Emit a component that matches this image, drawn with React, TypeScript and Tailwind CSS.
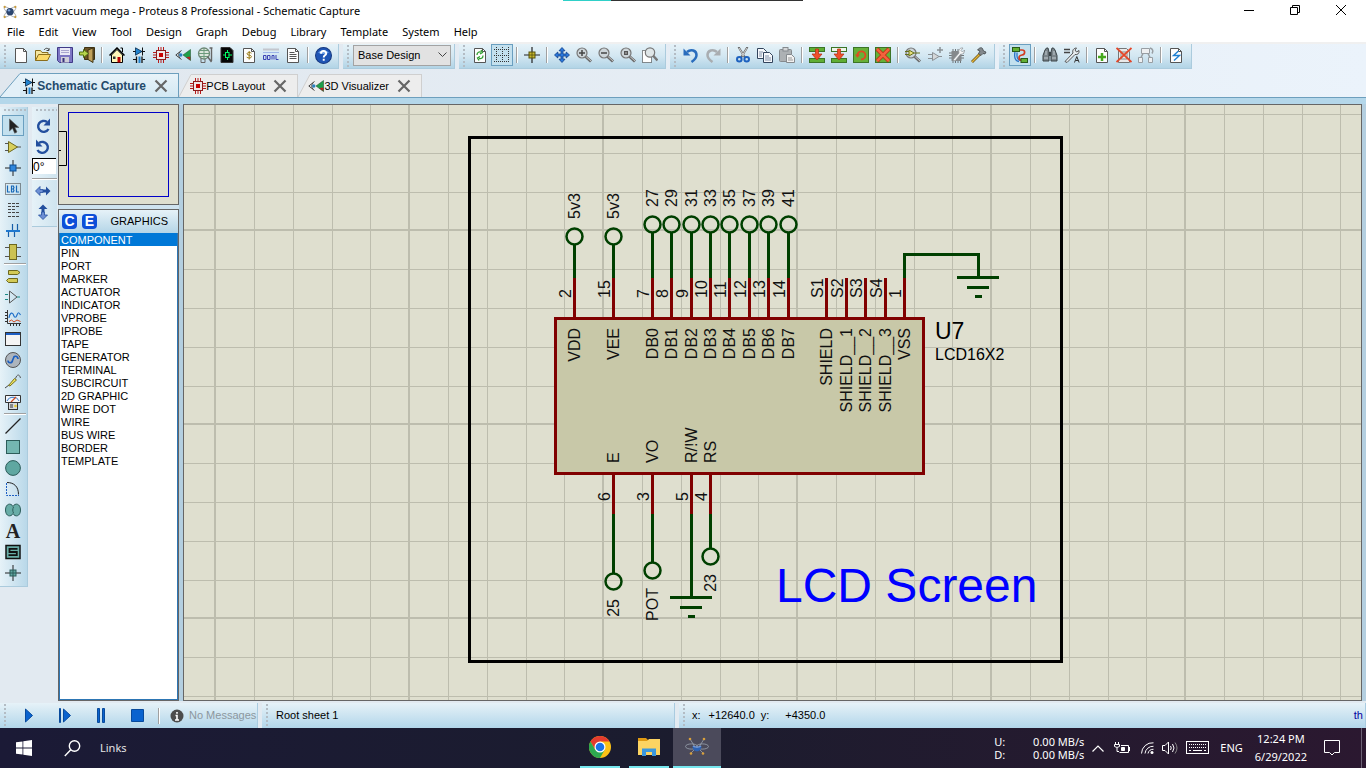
import React from "react";
import type { ReactNode } from "react";

const PAPER = "#fdfdfd";

function Pic({ s = 16, v = 16, children }: { s?: number; v?: number; children: ReactNode }) {
  return (
    <svg width={s} height={s} viewBox={`0 0 ${v} ${v}`} fill="none" aria-hidden="true" className="shrink-0">
      {children}
    </svg>
  );
}

function Page({ children }: { children?: ReactNode }) {
  return (
    <Pic>
      <path d="M2.500 1.500h8l3 3v11h-11z" fill={PAPER} stroke="#555" />
      <path d="M10.500 1.500v3h3" stroke="#555" />
      {children}
    </Pic>
  );
}

const NewFile = () => <Page />;

const OpenFolder = () => (
  <Pic>
    <path d="M.5 13.500v-10h5l1.500 2h6v3" fill="#f4e6a0" stroke="#8a6d1c" />
    <path d="M.5 13.500l3-6h12l-3 6z" fill="#fbd968" stroke="#8a6d1c" />
    <path d="M9 3c2-2.500 4-2 5 0m0-2v2.500h-2.500" stroke="#444" />
  </Pic>
);

const Disk = () => (
  <Pic>
    <path d="M.5.5h15v15h-13l-2-2z" fill="#7d76c4" stroke="#403a88" />
    <rect x="3" y="1" width="10" height="7" fill="#e9e9f6" />
    <path d="M4 3.500h8M4 5.500h8" stroke="#a9a6cf" />
    <rect x="4" y="10" width="8" height="5.500" fill="#cfcfd8" />
    <rect x="5.500" y="11" width="2" height="4" fill="#37327c" />
  </Pic>
);

const ExitDoor = () => (
  <Pic>
    <path d="M5.500.5h10v12h-10z" fill="#6d5426" stroke="#3e3212" />
    <path d="M9 3l5-2v14.500l-5-3z" fill="#c0a15a" stroke="#3e3212" />
    <path d="M.5 5h4V2.500l5 4-5 4V8h-4z" fill="#b7d64c" stroke="#4f6d12" />
  </Pic>
);

const House = () => (
  <Pic>
    <path d="M2.500 8v7.500h11V8L8 2.500z" fill="#fff6b8" stroke="#000" />
    <path d="M.5 8.500L8 1l7.500 7.500" stroke="#000" strokeWidth="1.500" />
    <path d="M11.500 1h2v4" stroke="#000" />
    <rect x="8.500" y="10" width="3" height="5.500" fill="#b00" />
    <rect x="4" y="9.500" width="2.500" height="2.500" fill="#333" />
  </Pic>
);

const Parts = () => (
  <Pic>
    <path d="M2 4.500h12M11.500.5v8M2 12.500h3M11.500 12.500H14" stroke="#111" />
    <path d="M4.500.8v7.400l6.500-3.700z" fill="#1f83cf" stroke="#0a2a4a" strokeWidth=".8" />
    <path d="M5.500 9.500v6.500M11 9.500v6.500" stroke="#111" strokeWidth="1.300" />
    <path d="M8.500 9.500v6.500" stroke="#1f83cf" strokeWidth="2" />
  </Pic>
);

const ChipRed = () => (
  <Pic>
    <path
      d="M5.500 0v3M8 0v3M10.500 0v3M5.500 13v3M8 13v3M10.500 13v3M0 5.500h3M0 8h3M0 10.500h3M13 5.500h3M13 8h3M13 10.500h3"
      stroke="#b81a1a"
    />
    <rect x="3.500" y="3.500" width="9" height="9" fill="#efe6e6" stroke="#8c1c1c" />
    <rect x="6" y="6" width="4" height="4" fill="#c80000" />
  </Pic>
);

const View3D = () => (
  <Pic>
    <path d="M6.500 3.500L.8 8l5.700 4.500" stroke="#444" />
    <path d="M5 4.800c-1.600 2-1.600 4.400 0 6.400" stroke="#444" />
    <circle cx="5.800" cy="8" r="1.700" fill="#2b80c0" />
    <path d="M15.500 2.500v11L8 8z" fill="#1fa04a" />
    <path d="M15.500 9.500v4l-4.500-3.300z" fill="#c02020" />
    <path d="M15.500 2.500L8 8l7.500 5.500z" stroke="#2b5b3a" strokeWidth=".6" />
  </Pic>
);

const Gerber = () => (
  <Pic>
    <circle cx="7" cy="6.500" r="5.500" fill="#dbe5dc" stroke="#6f8776" strokeWidth="1.300" />
    <path d="M1.500 6.500h11M7 1v11M3 3.500h8M3 9.500h8" stroke="#6c9a7c" />
    <path d="M10.500 9.500l4 5.500M14.500 1v13M12.500 1h3" stroke="#666" strokeWidth="1.400" />
    <path d="M4 11v4.500h4V12" stroke="#666" />
  </Pic>
);

const DesignDoc = () => (
  <Pic>
    <path d="M2 .5h9l3 3v12H2z" fill="#050505" stroke="#333" />
    <path d="M4 8h3M9.500 8H13M8.500 3v3M8.500 10v3" stroke="#0f6" />
    <rect x="6.500" y="5.500" width="3.500" height="5" stroke="#0f6" />
  </Pic>
);

const Bill = () => (
  <Page>
    <path d="M10.500 6.200c-1-1-4.500-1-4.500.6 0 1.800 4.500 1 4.500 2.900 0 1.700-3.500 1.600-4.800.5M8.200 4v8.500" stroke="#9a7b16" />
  </Page>
);

const Code = () => (
  <Pic>
    <path d="M0 2.500h16" stroke="#c3c6cd" strokeWidth="2" />
    <path d="M0 5.500h16" stroke="#9fb6e8" />
    <path d="M.5 8.500h2.500v4H.5zM4.500 8.500H7v4H4.500zM9 12.500v-4h2v4M13 8v4.500h2.500" stroke="#3b43b4" />
  </Pic>
);

const Notes = () => (
  <Page>
    <path d="M4.500 5.500h5M4.500 7.500h7M4.500 9.500h7M4.500 11.500h7" stroke="#555" />
  </Page>
);

const Help = () => (
  <Pic s={17}>
    <circle cx="8" cy="8" r="7.500" fill="#1f55b5" stroke="#173a80" />
    <path d="M3 5.500C4.500 2.500 11.500 2.500 13 5.500 10 7 6 7 3 5.500z" fill="#6fa0e6" />
    <path d="M5.500 6.200c.2-3.500 5.300-3 5 0-.1 1.700-2.300 1.700-2.300 3.600M8.200 11v2" stroke="#fff" strokeWidth="1.800" />
  </Pic>
);

const Refresh = () => (
  <Page>
    <path d="M5 8c0-3 2.500-3.500 4-2.800M9 3l1.500 2.500L8 7M11 8.500c0 3-2.500 3.500-4 2.800M7 13.500L5.500 11 8 9.500" stroke="#2f9e2f" strokeWidth="1.300" />
  </Page>
);

const GridDots = () => (
  <Pic>
    <path d="M2.500 0v16M8.500 0v16M14.500 0v16" stroke="#333" strokeDasharray="1 1" />
    <path d="M0 2.500h16M0 8.500h16M0 14.500h16" stroke="#333" strokeDasharray="1 1" />
  </Pic>
);

const Origin = () => (
  <Pic>
    <path d="M8 0v16M0 8h16" stroke="#222" strokeWidth="1.200" />
    <rect x="5" y="5" width="6" height="6" fill="#c9b92e" stroke="#55500e" />
    <path d="M8 5v6M5 8h6" stroke="#55500e" strokeWidth=".8" />
  </Pic>
);

const Pan = () => (
  <Pic>
    <path
      d="M8 .5l3 3.300H9v3.200h3.200V5l3.300 3-3.300 3V9H9v3.200h2L8 15.500l-3-3.300h2V9H3.800v2L.5 8l3.300-3v2H7V3.800H5z"
      fill="#2b78dc"
      stroke="#0d3c86"
      strokeWidth=".8"
    />
  </Pic>
);

function Lens({ children }: { children?: ReactNode }) {
  return (
    <Pic>
      <path d="M9.500 9.500l5.500 5" stroke="#6a6a6a" strokeWidth="3" />
      <path d="M10 9.500l5 4.500" stroke="#c7c7c7" strokeWidth="1" />
      <circle cx="6" cy="6" r="5" fill="#cdd5d9" stroke="#777" strokeWidth="1.200" />
      {children}
    </Pic>
  );
}

const ZoomIn = () => (
  <Lens>
    <path d="M3 6h6M6 3v6" stroke="#444" strokeWidth="1.500" />
  </Lens>
);
const ZoomOut = () => (
  <Lens>
    <path d="M3 6h6" stroke="#444" strokeWidth="1.500" />
  </Lens>
);
const ZoomAll = () => (
  <Lens>
    <rect x="4.500" y="4.500" width="3" height="3" fill="#888" stroke="#555" />
  </Lens>
);
const ZoomArea = () => (
  <Pic>
    <rect x=".5" y="3.500" width="9" height="12" fill="#fff" stroke="#222" strokeDasharray="1 1" />
    <path d="M11 8.500l4.500 5" stroke="#777" strokeWidth="2.500" />
    <circle cx="8" cy="5.500" r="4.700" fill="#dfe6e8" stroke="#777" strokeWidth="1.200" />
  </Pic>
);

const Undo = () => (
  <Pic>
    <path d="M4 5c4-3.500 9.500-1.500 9.500 3 0 3-2 5-5 7" stroke="#2a6dbd" strokeWidth="2.500" />
    <path d="M.5 1.500v7h7z" fill="#2a6dbd" />
  </Pic>
);
const Redo = () => (
  <Pic>
    <path d="M12 5C8 1.500 2.500 3.500 2.500 8c0 3 2 5 5 7" stroke="#a9adb1" strokeWidth="2.500" />
    <path d="M15.500 1.500v7h-7z" fill="#a9adb1" />
  </Pic>
);

const Scissors = () => (
  <Pic>
    <path d="M3.500 0L10 10.500M12.500 0L6 10.500" stroke="#666" strokeWidth="2" />
    <path d="M4 1l5 8M12 1L7 9" stroke="#eee" strokeWidth=".8" />
    <circle cx="4.300" cy="12.300" r="2.300" stroke="#1e62bf" strokeWidth="2" />
    <circle cx="11.700" cy="12.300" r="2.300" stroke="#1e62bf" strokeWidth="2" />
  </Pic>
);

const Copy = () => (
  <Pic>
    <path d="M.5 1.500h6l3 3v7h-9z" fill="#f6f8fb" stroke="#33445c" />
    <path d="M6.500 5.500h6l3 3v7h-9z" fill="#f6f8fb" stroke="#33445c" />
    <path d="M2 5h4M2 7h3M2 9h3M8 9h4M8 11h6M8 13h6" stroke="#8190a8" />
  </Pic>
);

const Paste = () => (
  <Pic>
    <rect x=".5" y="2.500" width="12" height="12" rx="1" fill="#adb1b4" stroke="#858a8e" />
    <rect x="4" y=".5" width="5" height="3.500" fill="#d4d6d8" stroke="#858a8e" />
    <path d="M7.500 7.500h5l3 3v5h-8z" fill="#f1f1f1" stroke="#858a8e" />
    <path d="M9 11h4M9 13h5" stroke="#999" />
  </Pic>
);

function Block({ top }: { top: string }) {
  return (
    <Pic>
      <rect x=".5" y=".5" width="15" height="4" fill={top} stroke="#3b7526" />
      <rect x=".5" y="11.500" width="15" height="4" fill="#5fae34" stroke="#3b7526" />
      <path d="M6.500 2h3v5H13l-5 6-5-6h3.500z" fill="#f0502a" stroke="#b32d10" strokeWidth=".7" />
    </Pic>
  );
}
const BlockCopy = () => <Block top="#5fae34" />;
const BlockMove = () => <Block top="#eef5ea" />;
const BlockRotate = () => (
  <Pic>
    <rect x=".5" y=".5" width="15" height="15" fill="#66b038" stroke="#3b7526" />
    <path d="M4.500 9A4 4 0 1 1 8 12.300" stroke="#e04a20" strokeWidth="1.800" />
    <path d="M2 7.500h5l-2.500 3.300z" fill="#e04a20" />
  </Pic>
);
const BlockDelete = () => (
  <Pic>
    <rect x=".5" y=".5" width="15" height="15" fill="#66b038" stroke="#3b7526" />
    <path d="M2 2l12 12M14 2L2 14" stroke="#b92d12" strokeWidth="4" />
    <path d="M2 2l12 12M14 2L2 14" stroke="#f4623c" strokeWidth="2.500" />
  </Pic>
);

const PickPart = () => (
  <Lens>
    <path d="M4 3v6l5-3zM0 4.500h4M0 7.500h4M9 6h6" fill="#e8e07a" stroke="#66701a" />
  </Lens>
);
const MakeDevice = () => (
  <Pic>
    <path d="M5.500 5.500v8L12 9.500zM1 7.500h4M1 11.500h4M12 9.500h3" fill="#d4d7d9" stroke="#8b9195" />
    <path d="M13 0v6M10 3h6" stroke="#8b9195" strokeWidth="1.500" />
  </Pic>
);
const Package = () => (
  <Pic>
    <path d="M4 2v14M6.500 2v14M9 2v14M11.500 2v14M0 6h15M0 8.500h15M0 11h15" stroke="#6f7579" />
    <rect x="2.500" y="4" width="10" height="10" fill="#85898c" />
    <path d="M4 13l6-7c-1-3 1-5.500 4-5l-2 2.500 1.500 1.500L15.500 3c.5 2.500-1.500 4.500-4 4.300L6 14z" fill="#f4f5f6" stroke="#8b9195" strokeWidth=".7" />
  </Pic>
);
const Hammer = () => (
  <Pic>
    <path d="M1 15l8-8" stroke="#6b5010" strokeWidth="2.800" />
    <path d="M1 15l8-8" stroke="#e2b53d" strokeWidth="1.400" />
    <path d="M6.500 3c2-2.500 4-3 5-1.500l1 2.500 2.500 1-1 2-2-.5-2 2-2.500-2 1.500-2.500z" fill="#83898d" stroke="#33383b" strokeWidth=".7" />
  </Pic>
);

const AutoRoute = () => (
  <Pic>
    <path d="M5 5.500v3.500c0 3 1 4.500 5 4.500M3 5c-1 5 0 9 4 9.500" stroke="#2a74c8" strokeWidth="1.300" />
    <path d="M7 3h3c3.500 0 3.500 4.500 0 5-4 .5-4 5 0 5.500" stroke="#d43a1f" strokeWidth="1.700" />
    <rect x=".5" y=".5" width="7" height="4" fill="#63b035" stroke="#28591a" />
    <rect x="9" y="11.500" width="6.500" height="4" fill="#63b035" stroke="#28591a" />
  </Pic>
);
const Binoculars = () => (
  <Pic>
    <path d="M3 3l1.500-2H6l1 4v9H1V8.500zM13 3l-1.500-2H10L9 5v9h6V8.500z" fill="#7b858b" stroke="#3a4347" />
    <path d="M7 5h2v4H7z" fill="#3a4347" />
    <path d="M2 11h4M10 11h4M4 4v4M12 4v4" stroke="#c3ccd1" />
  </Pic>
);
const Property = () => (
  <Pic>
    <path d="M0 2.500h6M0 5.500h6" stroke="#444" strokeWidth="1.300" />
    <path d="M1 14.500l8-8.500c-1-3 1-5 3.500-5L11 3l1.500 2L15 3.500c.5 3-1.500 4.500-4 4L3 15.500z" fill="#e9eef1" stroke="#555" />
    <path d="M10.500 15.500l2.300-6 2.300 6M11.500 13.500h3" stroke="#333" />
  </Pic>
);
const AddSheet = () => (
  <Page>
    <path d="M8 6v8M4 10h8" stroke="#45a81e" strokeWidth="2.500" />
  </Page>
);
const RemoveSheet = () => (
  <Pic>
    <path d="M2.500 1.500h8l3 3v11h-11z" fill="#e9e9e9" stroke="#777" />
    <path d="M5 5h6v7H5z" stroke="#888" />
    <path d="M.5 1l15 14M15.500 1L.5 15" stroke="#e3472a" strokeWidth="1.800" />
  </Pic>
);
const Hierarchy = () => (
  <Pic>
    <path d="M3.500 1.500h8v5h-8zM.5 10.500h4v5h-4zM10.500 10.500h4v5h-4z" fill="#eef0f2" stroke="#989ea3" />
    <path d="M5 6.500l-2 4M10 6.500l2 4M12 1c3 1 3.500 3 2 5.500" stroke="#989ea3" strokeWidth="1.500" />
  </Pic>
);
const Electrical = () => (
  <Page>
    <path d="M10.500 4L5.500 8.500h6L6 13.500" stroke="#1c7fd2" strokeWidth="1.400" />
  </Page>
);

const Pointer = () => (
  <Pic>
    <path d="M4.500 1v12l3-2.800 2.200 5L12 14l-2.200-4.600h4z" fill="#222" stroke="#555" strokeWidth=".6" />
  </Pic>
);
const Gate = () => (
  <Pic>
    <path d="M0 4.500h4M0 11.500h4M12 8h4" stroke="#555" />
    <path d="M3.500 2.500v11L12.500 8z" fill="#d8cf5a" stroke="#6d681e" />
  </Pic>
);
const Junction = () => (
  <Pic>
    <path d="M8 0v16M0 8h16" stroke="#222" />
    <rect x="5" y="5" width="6" height="6" fill="#2f86dc" stroke="#0c4c92" />
  </Pic>
);
const LabelBox = () => (
  <Pic>
    <rect x=".5" y="2.500" width="15" height="11" stroke="#333" strokeDasharray="1 1" />
    <path d="M2.500 4.500v6.500H5M6.500 5v6h1.800q1.400-1.500 0-3H6.500h1.800q1.400-1.500 0-3zM11.500 4.500v6.500H14" stroke="#1668b8" strokeWidth="1.200" />
  </Pic>
);
const TextScript = () => (
  <Pic>
    <path d="M3 1.500h11M3 4.500h11M3 7.500h8M3 10.500h11M3 14.500h11" stroke="#444" strokeDasharray="3 1" />
  </Pic>
);
const Bus = () => (
  <Pic>
    <path d="M7.500 1v7M12.500 1v7M3.500 8v6M9.500 8v6" stroke="#175ea8" strokeWidth="1.200" />
    <path d="M1 8h14" stroke="#1f78cf" strokeWidth="2" />
  </Pic>
);
const SubCircuit = () => (
  <Pic>
    <path d="M0 3.500h16M0 12.500h16" stroke="#555" />
    <rect x="4.500" y=".5" width="7" height="15" fill="#cbc252" stroke="#6d681e" />
  </Pic>
);
const Terminals = () => (
  <Pic>
    <path d="M3.500 2.500h9l2.500 2-2.500 2h-9zM12.500 10.500h-9l-2 2 2 2h9z" fill="#d3ca56" stroke="#6d681e" />
  </Pic>
);
const DevicePin = () => (
  <Pic>
    <path d="M0 5.500h4M0 10.500h4M12 8h4" stroke="#1b8a84" strokeDasharray="3 1" />
    <path d="M4.500 2v12L12 8z" stroke="#555" />
  </Pic>
);
const GraphIcon = () => (
  <Pic>
    <path d="M2.500 0v13.500H16M0 2.500h2M0 5.500h2M0 8.500h2M0 11.500h2M5.500 14v2M8.500 14v2M11.500 14v2M14.500 14v2" stroke="#333" />
    <path d="M4 8c1-6 3.500-6 4.500-3s2.500 3 3.500 0 2-3 3.500 0" stroke="#1f6fc8" strokeWidth="1.200" />
    <path d="M4 11.500l2.500-1.500L9 12l3-2 3.500 1.500" stroke="#d04a20" />
  </Pic>
);
const WindowIcon = () => (
  <Pic>
    <rect x=".5" y="1.500" width="15" height="13" fill="#f4f4f4" stroke="#333" />
    <path d="M1 3h14" stroke="#1d5fc4" strokeWidth="2" />
  </Pic>
);
const Generator = () => (
  <Pic>
    <circle cx="8" cy="8" r="7.500" fill="#adb5bd" stroke="#555" />
    <path d="M3 8.500c0 3 4 3 4.500 0l1-2.500c.5-3 4.500-2 4.500 1" stroke="#1b5fc0" strokeWidth="1.600" />
  </Pic>
);
const Probe = () => (
  <Pic>
    <path d="M0 15l4-3" stroke="#444" />
    <path d="M3.500 12.500l6-7 2 1.500-6.500 6z" fill="#efe65e" stroke="#77701e" />
    <path d="M10.500 5.500c1.500-4.500 4-4.500 5-.5" stroke="#555" />
  </Pic>
);
const Meter = () => (
  <Pic>
    <path d="M.5 1.500h15v7h-15z" fill="#f3f6fa" stroke="#333" />
    <path d="M2 7c2-5 10-5 12 0" stroke="#2d75c9" />
    <path d="M6 8l5-5" stroke="#d04a20" strokeWidth="1.300" />
    <rect x="3.500" y="8.500" width="9" height="7" fill="#d5d9dd" stroke="#333" />
    <path d="M5 11h3M5 13h3" stroke="#333" />
    <circle cx="10.500" cy="12" r="1.300" fill="#e6c829" />
  </Pic>
);
const LineIcon = () => (
  <Pic>
    <path d="M.5 15.500l15-15" stroke="#222" strokeWidth="1.200" />
  </Pic>
);
const BoxIcon = () => (
  <Pic>
    <rect x="1.500" y="1.500" width="13" height="13" fill="#74b7b1" stroke="#2d5d5a" />
  </Pic>
);
const CircleIcon = () => (
  <Pic>
    <circle cx="8" cy="8" r="7.400" fill="#5fa7a1" stroke="#2d5d5a" />
  </Pic>
);
const ArcIcon = () => (
  <Pic>
    <path d="M1.500 2v12.500H14" stroke="#1d5fc4" strokeDasharray="2 1" />
    <path d="M2 1.500c7 0 11.500 4 11.500 12" stroke="#222" />
  </Pic>
);
const PathIcon = () => (
  <Pic>
    <path
      d="M8 4.500C6 .5.5 1.500.5 8s5.500 7.500 7.500 3.500c2 4 7.500 3 7.500-3.500S10 .5 8 4.500z"
      fill="#68ada7"
      stroke="#2d5d5a"
    />
    <path d="M8.500 5c-1 2-1 4 0 6" stroke="#2d5d5a" />
  </Pic>
);
const SymbolS = () => (
  <Pic>
    <rect x="1" y="1.500" width="14" height="13" fill="#68ada7" stroke="#111" strokeWidth="1.500" />
    <path d="M12.500 4.800H4.500V8h7.300v3.200H3.500" stroke="#111" strokeWidth="1.800" />
  </Pic>
);
const Marker = () => (
  <Pic>
    <path d="M8 0v16M0 8h16" stroke="#222" />
    <rect x="5" y="5" width="6" height="6" fill="#5fa7a1" stroke="#2d5d5a" />
    <path d="M8 5v6M5 8h6" stroke="#2d5d5a" />
  </Pic>
);

const RotateCw = () => (
  <Pic>
    <path d="M12 4A5.500 5.500 0 1 0 13.500 11" stroke="#234f9e" strokeWidth="2.400" />
    <path d="M15 .5v7H8.500z" fill="#234f9e" />
  </Pic>
);
const RotateCcw = () => (
  <Pic>
    <path d="M4 4A5.500 5.500 0 1 1 2.500 11" stroke="#234f9e" strokeWidth="2.400" />
    <path d="M1 .5v7h6.500z" fill="#234f9e" />
  </Pic>
);
const MirrorX = () => (
  <Pic>
    <path d="M.5 8L5 3.500v3h3v3H5v3z" fill="#6d8fd4" stroke="#234f9e" strokeWidth=".8" />
    <path d="M15.500 8L11 3.500v3H8v3h3v3z" fill="#234f9e" />
  </Pic>
);
const MirrorY = () => (
  <Pic>
    <path d="M8 15.500L3.500 11h3V8h3v3h3z" fill="#6d8fd4" stroke="#234f9e" strokeWidth=".8" />
    <path d="M8 .5L3.500 5h3v3h3V5h3z" fill="#234f9e" />
  </Pic>
);

function Atom({ s, line }: { s: number; line: string }) {
  return (
    <Pic s={s} v={24}>
      <ellipse cx="12" cy="12" rx="11" ry="3.500" transform="rotate(40 12 12)" stroke={line} />
      <ellipse cx="12" cy="12" rx="11" ry="3.500" transform="rotate(-40 12 12)" stroke={line} />
      <circle cx="12" cy="11.500" r="5.500" fill="#2c466f" />
      <circle cx="10.500" cy="9.500" r="1.800" fill="#7ea2d8" />
      <circle cx="4" cy="4.500" r="1.700" fill="#c79a3c" />
      <circle cx="20" cy="4.500" r="1.700" fill="#c79a3c" />
      <circle cx="4" cy="19.500" r="1.700" fill="#c79a3c" />
      <circle cx="20" cy="19.500" r="1.700" fill="#c79a3c" />
    </Pic>
  );
}

const ProteusTask = () => (
  <Pic s={24} v={24}>
    <ellipse cx="6.500" cy="11.500" rx="6" ry="2.600" stroke="#9aa3ae" strokeWidth=".8" />
    <ellipse cx="17.500" cy="11.500" rx="6" ry="2.600" stroke="#9aa3ae" strokeWidth=".8" />
    <path d="M5 4l5 8M19 4l-5 8M6 18l5-5M18 18l-5-5" stroke="#9aa3ae" strokeWidth=".8" />
    <path d="M7.500 11c0 7 9 7 9 0-2 2-7 2-9 0z" fill="#2c62b4" />
    <path d="M8 11c2 1.500 6 1.500 8 0" stroke="#6f9be0" strokeWidth="1.200" />
    <circle cx="5" cy="4" r="1.300" fill="#d8a03c" />
    <circle cx="19" cy="4" r="1.300" fill="#d8a03c" />
    <circle cx="6" cy="18.500" r="1.300" fill="#d8a03c" />
    <circle cx="18" cy="18.500" r="1.300" fill="#d8a03c" />
  </Pic>
);

type Tool = { name: string; icon: () => ReactNode; on?: boolean } | "sep";

const fileTools: Tool[] = [
  { name: "New Project", icon: NewFile },
  { name: "Open Project", icon: OpenFolder },
  { name: "Save Project", icon: Disk },
  { name: "Close Project", icon: ExitDoor },
  "sep",
  { name: "Home Page", icon: House },
  { name: "Schematic", icon: Parts },
  { name: "PCB", icon: ChipRed },
  { name: "3D View", icon: View3D },
  { name: "Gerber Viewer", icon: Gerber },
  { name: "Design Explorer", icon: DesignDoc },
  { name: "Bill of Materials", icon: Bill },
  { name: "Source Code", icon: Code },
  { name: "Project Notes", icon: Notes },
  "sep",
  { name: "Overview", icon: Help },
];
const viewTools: Tool[] = [
  { name: "Redraw", icon: Refresh },
  { name: "Toggle Grid", icon: GridDots, on: true },
  "sep",
  { name: "False Origin", icon: Origin },
  "sep",
  { name: "Centre at Cursor", icon: Pan },
  { name: "Zoom In", icon: ZoomIn },
  { name: "Zoom Out", icon: ZoomOut },
  { name: "Zoom All", icon: ZoomAll },
  { name: "Zoom Area", icon: ZoomArea },
];
const editTools: Tool[] = [
  { name: "Undo", icon: Undo },
  { name: "Redo", icon: Redo },
  "sep",
  { name: "Cut", icon: Scissors },
  { name: "Copy", icon: Copy },
  { name: "Paste", icon: Paste },
  "sep",
  { name: "Block Copy", icon: BlockCopy },
  { name: "Block Move", icon: BlockMove },
  { name: "Block Rotate", icon: BlockRotate },
  { name: "Block Delete", icon: BlockDelete },
  "sep",
  { name: "Pick Parts", icon: PickPart },
  { name: "Make Device", icon: MakeDevice },
  { name: "Packaging Tool", icon: Package },
  { name: "Decompose", icon: Hammer },
];
const designTools: Tool[] = [
  { name: "Wire Autorouter", icon: AutoRoute, on: true },
  "sep",
  { name: "Search", icon: Binoculars },
  { name: "Property Assignment", icon: Property },
  "sep",
  { name: "New Sheet", icon: AddSheet },
  { name: "Remove Sheet", icon: RemoveSheet },
  { name: "Exit to Parent", icon: Hierarchy },
  "sep",
  { name: "Electrical Check", icon: Electrical },
];

const LetterA = () => <span className="font-['Liberation_Serif',serif] text-xl leading-5 font-bold text-[#222]">A</span>;

const modeTools: Tool[] = [
  { name: "Selection", icon: Pointer, on: true },
  { name: "Component", icon: Gate },
  { name: "Junction Dot", icon: Junction },
  { name: "Wire Label", icon: LabelBox },
  { name: "Text Script", icon: TextScript },
  { name: "Buses", icon: Bus },
  { name: "Subcircuit", icon: SubCircuit },
  "sep",
  { name: "Terminals", icon: Terminals },
  { name: "Device Pins", icon: DevicePin },
  { name: "Graph", icon: GraphIcon },
  { name: "Active Popup", icon: WindowIcon },
  { name: "Generator", icon: Generator },
  { name: "Probe", icon: Probe },
  { name: "Instruments", icon: Meter },
  "sep",
  { name: "Line", icon: LineIcon },
  { name: "Box", icon: BoxIcon },
  { name: "Circle", icon: CircleIcon },
  { name: "Arc", icon: ArcIcon },
  { name: "Path", icon: PathIcon },
  { name: "Text", icon: LetterA },
  { name: "Symbols", icon: SymbolS },
  { name: "Markers", icon: Marker },
];

const menus = ["File", "Edit", "View", "Tool", "Design", "Graph", "Debug", "Library", "Template", "System", "Help"];

const graphics = [
  "COMPONENT",
  "PIN",
  "PORT",
  "MARKER",
  "ACTUATOR",
  "INDICATOR",
  "VPROBE",
  "IPROBE",
  "TAPE",
  "GENERATOR",
  "TERMINAL",
  "SUBCIRCUIT",
  "2D GRAPHIC",
  "WIRE DOT",
  "WIRE",
  "BUS WIRE",
  "BORDER",
  "TEMPLATE",
];

function Grip({ flat = false }: { flat?: boolean }) {
  return flat ? (
    <div className="h-2 w-full shrink-0 pt-0.5 pl-1">
      <div className="h-0.5 bg-[repeating-linear-gradient(90deg,#b3bcc4_0_2px,transparent_2px_4px)]" />
    </div>
  ) : (
    <div className="w-2.5 shrink-0 self-stretch py-px pl-1">
      <div className="h-full w-0.5 bg-[repeating-linear-gradient(180deg,#b3bcc4_0_2px,transparent_2px_4px)]" />
    </div>
  );
}

function ToolButton({ tool, tall = false }: { tool: Exclude<Tool, "sep">; tall?: boolean }) {
  const Icon = tool.icon;
  return (
    <button
      type="button"
      aria-label={tool.name}
      aria-pressed={tool.on}
      className={`flex w-[22px] shrink-0 items-center justify-center border ${tall ? "h-[21px]" : "h-[22px]"} ${
        tool.on ? "border-[#6a9fc0] bg-[#c3e0ee]" : "border-transparent"
      }`}
    >
      <Icon />
    </button>
  );
}

function Bar({ tools, label }: { tools: Tool[]; label: string }) {
  return (
    <div
      role="toolbar"
      aria-label={label}
      className="flex h-[25px] items-start border-r border-b border-[#abcbdd] bg-linear-to-b from-[#e6f2f8] via-[#d3e7f2] to-[#b2d4e6] pr-1"
    >
      <Grip />
      {tools.map((t, i) =>
        t === "sep" ? (
          <div key={i} className="flex w-2 shrink-0 justify-center pt-[3px]">
            <div className="h-4 w-0.5 border-r border-white bg-[#a0a0a0]" />
          </div>
        ) : (
          <ToolButton key={i} tool={t} />
        ),
      )}
    </div>
  );
}

function CloseX() {
  return (
    <svg width="14" height="14" viewBox="0 0 14 14" fill="none" aria-hidden="true">
      <path d="M1.500 1.500l11 11M12.500 1.500l-11 11" stroke="#666" strokeWidth="2.200" />
    </svg>
  );
}

function Tab({ icon, text, active = false, size }: { icon: ReactNode; text: string; active?: boolean; size: string }) {
  const line = active ? "#6d9fbd" : "#cfcfcf";
  const fill = active ? "#e3f0f8" : "#ededed";
  return (
    <div className={`flex shrink-0 items-end ${active ? "h-6" : "h-[23px]"} ${size}`}>
      <svg
        width={active ? 20 : 12}
        height="100%"
        viewBox="0 0 20 24"
        preserveAspectRatio="none"
        aria-hidden="true"
        className="shrink-0"
      >
        <path d="M0 24L20 0v24z" fill={fill} />
        <path d="M0 24L20 .5" stroke={line} vectorEffect="non-scaling-stroke" />
      </svg>
      <div
        className={`flex h-full min-w-0 flex-1 items-center justify-end border-t border-r ${
          active ? "border-[#6d9fbd] bg-linear-to-b from-[#e8f3f9] to-[#d3e8f3]" : "border-[#cfcfcf] bg-[#ededed]"
        }`}
      >
        <button
          type="button"
          className={`flex items-center whitespace-nowrap ${
            active ? "text-xs font-bold text-[#244a6b]" : "text-[11px] text-black"
          }`}
        >
          {icon}
          {text}
        </button>
        <button type="button" aria-label={`Close ${text}`} className="mr-2.5 ml-2 shrink-0">
          <CloseX />
        </button>
      </div>
    </div>
  );
}

const GREEN = "#004000";
const RED = "#800000";

const topPins = [
  { x: 574, pin: "2", name: "VDD", net: "5v3", y: 236 },
  { x: 613, pin: "15", name: "VEE", net: "5v3", y: 236 },
  { x: 652, pin: "7", name: "DB0", net: "27", y: 224 },
  { x: 671, pin: "8", name: "DB1", net: "29", y: 224 },
  { x: 691, pin: "9", name: "DB2", net: "31", y: 224 },
  { x: 710, pin: "10", name: "DB3", net: "33", y: 224 },
  { x: 729, pin: "11", name: "DB4", net: "35", y: 224 },
  { x: 749, pin: "12", name: "DB5", net: "37", y: 224 },
  { x: 768, pin: "13", name: "DB6", net: "39", y: 224 },
  { x: 788, pin: "14", name: "DB7", net: "41", y: 224 },
  { x: 826, pin: "S1", name: "SHIELD" },
  { x: 846, pin: "S2", name: "SHIELD__1" },
  { x: 865, pin: "S3", name: "SHIELD__2" },
  { x: 885, pin: "S4", name: "SHIELD__3" },
  { x: 904, pin: "1", name: "VSS" },
];

const bottomPins = [
  { x: 613, pin: "6", name: "E", net: "25", y: 581 },
  { x: 652, pin: "3", name: "VO", net: "POT", y: 570 },
  { x: 691, pin: "5", name: "R/!W" },
  { x: 710, pin: "4", name: "RS", net: "23", y: 556 },
];

function Up({ x, y, end = false, children }: { x: number; y: number; end?: boolean; children: string }) {
  return (
    <text transform={`translate(${x} ${y}) rotate(-90)`} textAnchor={end ? "end" : "start"} fontSize="16" fill="#111">
      {children}
    </text>
  );
}

function Ground({ x, y }: { x: number; y: number }) {
  return (
    <path d={`M${x - 21} ${y}h42M${x - 11} ${y + 10}h22M${x - 3} ${y + 19}h7`} stroke={GREEN} strokeWidth="3" />
  );
}

function Schematic() {
  return (
    <svg
      role="img"
      aria-label="LCD screen schematic"
      className="block size-full font-['Liberation_Sans',Arial,sans-serif]"
      fill="none"
    >
      <defs>
        <pattern id="grid" x="20" y="35" width="194" height="194" patternUnits="userSpaceOnUse">
          <path d="M40.500 0v194M79.500 0v194M118.500 0v194M156.500 0v194M0 40.500h194M0 79.500h194M0 118.500h194M0 157.500h194" stroke="#bdbdae" />
          <path d="M1 0v194M0 1h194" stroke="#bdbdae" strokeWidth="2" />
        </pattern>
      </defs>
      <g transform="translate(-184 -105)">
        <rect x="0" y="0" width="6000" height="4000" fill="url(#grid)" />
        <rect x="469.500" y="137.500" width="592" height="524" stroke="#000" strokeWidth="3" />
        <rect x="555.500" y="318.500" width="368" height="155" fill="#c8c8a8" stroke={RED} strokeWidth="3" />
        {topPins.map((p) => (
          <g key={p.x}>
            <path d={`M${p.x + 0.5} 278v40`} stroke={RED} strokeWidth="3" />
            {p.y && (
              <>
                <path d={`M${p.x + 0.5} ${p.y + 8}V278`} stroke={GREEN} strokeWidth="3" />
                <circle cx={p.x + 0.5} cy={p.y + 0.5} r="8" stroke={GREEN} strokeWidth="2.500" />
                <Up x={p.x + 6} y={p.y === 224 ? 207 : 219}>
                  {p.net ?? ""}
                </Up>
              </>
            )}
            <Up x={p.x - 3} y={298}>
              {p.pin}
            </Up>
            <Up x={p.x + 6} y={328} end>
              {p.name}
            </Up>
          </g>
        ))}
        <path d="M904.500 278v-23.500h74v23" stroke={GREEN} strokeWidth="3" />
        <Ground x={978} y={277.5} />
        {bottomPins.map((p) => (
          <g key={p.x}>
            <path d={`M${p.x + 0.5} 474v40`} stroke={RED} strokeWidth="3" />
            <path d={`M${p.x + 0.5} 514V${p.y ? p.y - 7 : 597}`} stroke={GREEN} strokeWidth="3" />
            {p.y && (
              <>
                <circle cx={p.x + 0.5} cy={p.y + 0.5} r="8" stroke={GREEN} strokeWidth="2.500" />
                <Up x={p.x + 6} y={p.y + 18} end>
                  {p.net ?? ""}
                </Up>
              </>
            )}
            <Up x={p.x - 3} y={501}>
              {p.pin}
            </Up>
            <Up x={p.x + 6} y={463}>
              {p.name}
            </Up>
          </g>
        ))}
        <Ground x={691} y={597.5} />
        <text x="935" y="339" fontSize="23" fill="#000">
          U7
        </text>
        <text x="935" y="360" fontSize="16" fill="#000">
          LCD16X2
        </text>
        <text x="776" y="602" fontSize="48" fill="#00f">
          LCD Screen
        </text>
      </g>
    </svg>
  );
}

function TitleBar() {
  return (
    <header className="relative flex h-[23px] shrink-0 items-center bg-white pl-[2px] font-['Noto_Sans','Open_Sans',sans-serif] text-[11px]">
      <div className="absolute top-0 left-[563px] flex h-px w-60">
        <div className="w-12 bg-[#2fd0c8]" />
        <div className="flex-1 bg-[#333]" />
      </div>
      <Atom s={16} line="#8d949c" />
      <h1 className="ml-[5px] whitespace-nowrap">samrt vacuum mega - Proteus 8 Professional - Schematic Capture</h1>
      <div className="mr-0.5 ml-auto flex h-5 self-start">
        <button type="button" aria-label="Minimize" className="flex h-full w-[46px] items-center justify-center">
          <svg width="10" height="10" viewBox="0 0 10 10" aria-hidden="true">
            <path d="M0 5.500h10" stroke="#000" />
          </svg>
        </button>
        <button type="button" aria-label="Restore" className="flex h-full w-[46px] items-center justify-center">
          <svg width="10" height="10" viewBox="0 0 10 10" fill="none" aria-hidden="true">
            <path d="M.5 2.500h7v7h-7zM2.500 2.500v-2h7v7h-2" stroke="#000" />
          </svg>
        </button>
        <button type="button" aria-label="Close" className="flex h-full w-[46px] items-center justify-center">
          <svg width="10" height="10" viewBox="0 0 10 10" aria-hidden="true">
            <path d="M0 0l10 10M10 0L0 10" stroke="#000" />
          </svg>
        </button>
      </div>
    </header>
  );
}

function StatusBar() {
  const cell = "flex h-full items-center border-r border-[#a9cbe0] bg-linear-to-b from-[#e6f2f8] to-[#b2d6ea]";
  return (
    <div className="flex h-[25px] shrink-0 gap-1 text-[11px]">
      <div className={`${cell} w-[258px] shrink-0`}>
        <Grip />
        <div className="ml-px flex">
          <button type="button" aria-label="Run" className="flex w-9 justify-center">
            <svg width="16" height="16" viewBox="0 0 16 16" aria-hidden="true">
              <path d="M4.500 1v13l7-6.500z" fill="#0a63cf" stroke="#084a9c" />
            </svg>
          </button>
          <button type="button" aria-label="Step" className="flex w-9 justify-center">
            <svg width="16" height="16" viewBox="0 0 16 16" aria-hidden="true">
              <path d="M2.500.5h1v14h-1zM6.500 1v13l7-6.500z" fill="#0a63cf" stroke="#084a9c" />
            </svg>
          </button>
          <button type="button" aria-label="Pause" className="flex w-9 justify-center">
            <svg width="16" height="16" viewBox="0 0 16 16" aria-hidden="true">
              <path d="M4.500.5h2v14h-2zM9.500.5h2v14h-2z" fill="#0a63cf" stroke="#084a9c" />
            </svg>
          </button>
          <button type="button" aria-label="Stop" className="flex w-9 justify-center">
            <svg width="16" height="16" viewBox="0 0 16 16" aria-hidden="true">
              <path d="M2.500 1.500h12v12h-12z" fill="#0a63cf" stroke="#084a9c" />
            </svg>
          </button>
        </div>
        <div className="mr-2.5 ml-[3px] h-4 w-0.5 border-r border-white bg-[#a0a0a0]" />
        <svg width="14" height="14" viewBox="0 0 14 14" aria-hidden="true" className="shrink-0">
          <circle cx="7" cy="7" r="6.500" fill="#4c4c4c" />
          <path d="M7 3v1.800M5.500 6.500H7V11M5 11h4" stroke="#fff" strokeWidth="1.600" fill="none" />
        </svg>
        <span className="ml-[5px] whitespace-nowrap text-[#8c979e]">No Messages</span>
      </div>
      <div className={`${cell} w-[413px] shrink-0`}>
        <Grip />
        <span className="ml-1">Root sheet 1</span>
      </div>
      <div className={`${cell} min-w-0 flex-1 pr-0.5`}>
        <Grip />
        <span className="ml-[3px]">x:</span>
        <span className="ml-2">+12640.0</span>
        <span className="ml-1.5">y:</span>
        <span className="ml-4">+4350.0</span>
        <span className="ml-auto text-[#0000a0]">th</span>
      </div>
    </div>
  );
}

function TaskBar() {
  return (
    <footer className="flex h-10 shrink-0 items-center bg-linear-to-r from-[#1b1a36] via-[#1b1c2e] to-[#2b1830] font-['Noto_Sans','Open_Sans',sans-serif] text-[11px] text-white">
      <button type="button" aria-label="Start" className="flex w-12 justify-center">
        <svg width="16" height="16" viewBox="0 0 16 16" fill="#fff" aria-hidden="true">
          <path d="M0 2.300L6.500 1.400v6.200H0zM7.300 1.300L16 0v7.600H7.300zM0 8.400h6.500v6.200L0 13.700zM7.300 8.400H16V16l-8.700-1.300z" />
        </svg>
      </button>
      <button type="button" aria-label="Search" className="flex w-12 justify-center">
        <svg width="17" height="17" viewBox="0 0 17 17" fill="none" stroke="#fff" strokeWidth="1.400" aria-hidden="true">
          <circle cx="10.500" cy="6" r="5.200" />
          <path d="M6.800 9.700L.8 16" />
        </svg>
      </button>
      <a href="#links" className="ml-1 w-[27px] text-[#e4e4e4]">
        Links
      </a>
      <nav aria-label="Running apps" className="ml-[448px] flex h-full">
        <button type="button" aria-label="Chrome" className="flex h-full w-[49px] flex-col items-center">
          <span className="flex flex-1 items-center">
            <svg width="22" height="22" viewBox="0 0 22 22" aria-hidden="true">
              <circle cx="11" cy="11" r="11" fill="#fbc116" />
              <path d="M1.470 5.500A11 11 0 0 1 20.530 5.500H11L6.240 13.750z" fill="#e33b2e" />
              <path d="M1.470 5.500A11 11 0 0 0 11 22l4.760-8.250L6.240 13.750z" fill="#2da94f" />
              <circle cx="11" cy="11" r="5.500" fill="#fff" />
              <circle cx="11" cy="11" r="4.300" fill="#1a73e8" />
            </svg>
          </span>
          <span className="h-0.5 w-10 bg-[#76e6ee]" />
        </button>
        <button type="button" aria-label="File Explorer" className="flex h-full w-[49px] flex-col items-center">
          <span className="flex flex-1 items-center">
            <svg width="22" height="18" viewBox="0 0 22 18" aria-hidden="true">
              <path d="M0 0h8l2 2v3H0z" fill="#e09a12" />
              <path d="M0 3h9l2-2h11v16H0z" fill="#fcd462" />
              <path d="M4 18v-7.500h14V18h-4v-4H8v4z" fill="#3b97dd" />
            </svg>
          </span>
          <span className="h-0.5 w-10 bg-[#76e6ee]" />
        </button>
        <button type="button" aria-label="Proteus" className="flex h-full w-12 flex-col items-center bg-[#4b4a5b]">
          <span className="flex flex-1 items-center">
            <ProteusTask />
          </span>
          <span className="h-0.5 w-full bg-[#76e6ee]" />
        </button>
      </nav>
      <div className="ml-auto flex h-full items-center">
        <div className="grid w-[90px] grid-cols-[auto_auto] justify-between leading-[13px] whitespace-nowrap">
          <span>U:</span>
          <span>0.00 MB/s</span>
          <span>D:</span>
          <span>0.00 MB/s</span>
        </div>
        <button type="button" aria-label="Show hidden icons" className="ml-2">
          <svg width="12" height="7" viewBox="0 0 12 7" fill="none" aria-hidden="true">
            <path d="M.5 6.500L6 1l5.500 5.500" stroke="#fff" strokeWidth="1.200" />
          </svg>
        </button>
        <svg width="17" height="13" viewBox="0 0 17 13" fill="none" stroke="#fff" className="ml-2.5" aria-hidden="true">
          <path d="M7 3.500h7.500v7h-9M15.500 5v4" />
          <path d="M1.500 0v2.500M4.500 0v2.500M.5 2.500h5v2q-2.500 2-5 0zM3 6v3.500h2" />
          <path d="M7.500 5.500h3v3h-3z" fill="#fff" />
        </svg>
        <svg width="13" height="12" viewBox="0 0 13 12" fill="none" className="ml-2.5" aria-hidden="true">
          <path d="M.5 11.500A11 11 0 0 1 12.500.8M4 11.500a8 8 0 0 1 8.500-7.200M7 11.500a5 5 0 0 1 5.500-4.200" stroke="#fff" />
          <circle cx="11" cy="10.500" r="1.500" fill="#fff" />
        </svg>
        <svg width="16" height="14" viewBox="0 0 16 14" fill="none" className="ml-2" aria-hidden="true">
          <path d="M.5 4.500h2.500L6.500 1v12L3 9.500H.5zM8.500 5q1.500 2 0 4M10.500 3q3 4 0 8" stroke="#fff" />
          <path d="M13 1.500q4 5.500 0 11" stroke="#888" />
        </svg>
        <svg width="24" height="14" viewBox="0 0 24 14" fill="none" stroke="#fff" className="ml-2" aria-hidden="true">
          <rect x=".5" y=".5" width="22" height="12" />
          <path d="M3 3.500h17M3 6.500h17" strokeDasharray="1 1" />
          <path d="M3 9.500h2M7 9.500h9M18 9.500h2" />
        </svg>
        <span className="ml-2.5">ENG</span>
        <time className="ml-3 text-center leading-[18px] whitespace-nowrap">
          12:24 PM
          <br />
          6/29/2022
        </time>
        <button type="button" aria-label="Notifications" className="mr-5 ml-[17px]">
          <svg width="17" height="16" viewBox="0 0 17 16" fill="none" aria-hidden="true">
            <path d="M.5.5h15v12h-5l-2.500 2.500-2.500-2.500h-5z" stroke="#fff" />
          </svg>
        </button>
        <div className="mr-1 h-full w-px bg-[#6c6275]" />
      </div>
    </footer>
  );
}

export default function App() {
  return (
    <div className="flex h-screen flex-col overflow-hidden bg-[#e2eaf1] font-['Liberation_Sans',Arial,sans-serif] text-black">
      <TitleBar />
      <nav
        aria-label="Main menu"
        className="flex h-[19px] shrink-0 items-center gap-3.5 bg-white pl-[7px] font-['Noto_Sans','Open_Sans',sans-serif] text-[11px]"
      >
        {menus.map((m) => (
          <button key={m} type="button">
            {m}
          </button>
        ))}
      </nav>
      <div className="shrink-0 border-t-2 border-[#f0f0f0] bg-linear-to-r from-[#e0e7ee] to-[#ebf3fb]">
        <div className="flex gap-1">
          <Bar tools={fileTools} label="Project" />
          <div className="flex h-[25px] items-start border-r border-b border-[#abcbdd] bg-linear-to-b from-[#e6f2f8] via-[#d3e7f2] to-[#b2d4e6] pr-[3px]">
            <Grip />
            <div className="relative flex pt-px">
              <select
                aria-label="Design variant"
                className="h-[21px] w-[98px] appearance-none rounded-none border border-[#a3a3a3] bg-[#e2e2e2] pl-1 text-[11px]"
              >
                <option>Base Design</option>
              </select>
              <svg
                width="9"
                height="6"
                viewBox="0 0 9 6"
                fill="none"
                aria-hidden="true"
                className="pointer-events-none absolute top-2 right-1"
              >
                <path d="M.5.5l4 4 4-4" stroke="#444" />
              </svg>
            </div>
          </div>
          <Bar tools={viewTools} label="View" />
          <Bar tools={editTools} label="Edit" />
          <Bar tools={designTools} label="Design" />
        </div>
        <div className="flex h-[29px] items-end border-b border-[#6d9fbd]">
          <Tab active icon={<Parts />} text="Schematic Capture" size="w-[179px]" />
          <Tab icon={<ChipRed />} text="PCB Layout" size="w-[119px]" />
          <Tab icon={<View3D />} text="3D Visualizer" size="w-[124px]" />
        </div>
      </div>
      <div className="h-1.5 shrink-0 bg-[#b4d7ea]" />
      <main className="flex min-h-0 flex-1">
        <aside aria-label="Modes" className="flex w-[58px] shrink-0 items-start gap-1 pt-[3px]">
          <div className="flex w-7 flex-col border-r border-b border-[#abcbdd] bg-linear-to-r from-[#e6f2f8] to-[#b9d8e9] pb-[3px]">
            <Grip flat />
            <div className="pl-0.5">
              {modeTools.map((t, i) =>
                t === "sep" ? (
                  <div key={i} className="ml-0.5 flex h-[3px] w-[22px] items-center">
                    <div className="h-0.5 w-full border-b border-white bg-[#a0a0a0]" />
                  </div>
                ) : (
                  <ToolButton key={i} tool={t} tall />
                ),
              )}
            </div>
          </div>
          <div className="flex w-[25px] flex-col items-start border-b border-[#abcbdd] bg-linear-to-r from-[#e6f2f8] to-[#cfe4ef] pb-1">
            <Grip flat />
            <ToolButton tool={{ name: "Rotate Clockwise", icon: RotateCw }} tall />
            <ToolButton tool={{ name: "Rotate Anticlockwise", icon: RotateCcw }} tall />
            <input
              aria-label="Rotation angle"
              defaultValue="0°"
              className="mt-px h-4 w-6 border-t border-l border-black bg-white text-xs outline-none"
            />
            <div className="mt-1 h-0.5 w-full border-b border-white bg-[#a0a0a0]" />
            <ToolButton tool={{ name: "Mirror Horizontally", icon: MirrorX }} tall />
            <ToolButton tool={{ name: "Mirror Vertically", icon: MirrorY }} tall />
          </div>
        </aside>
        <section aria-label="Object selector" className="flex w-[121px] shrink-0 flex-col gap-1 bg-[#cfe3ef]">
          <div className="h-[101px] shrink-0 border border-[#666] bg-[#dfdfcf]">
            <svg width="100%" height="100%" fill="none" role="img" aria-label="Sheet overview">
              <path d="M0 26.500h7.500v34H0M0 45.500h2" stroke="#000" />
              <rect x="9.500" y="7.500" width="100" height="84" stroke="#0000c8" />
            </svg>
          </div>
          <div className="flex min-h-0 flex-1 flex-col border border-[#666] bg-white">
            <div className="flex h-[23px] shrink-0 items-center bg-linear-to-b from-[#e6f2f8] to-[#b4d5e7] pr-2.5 pl-[3px]">
              <button
                type="button"
                aria-label="Create object"
                className="size-[15px] rounded-sm bg-[#0d4fd8] text-sm leading-[15px] font-bold text-white"
              >
                C
              </button>
              <button
                type="button"
                aria-label="Edit object"
                className="ml-[5px] size-[15px] rounded-sm bg-[#0d4fd8] text-sm leading-[15px] font-bold text-white"
              >
                E
              </button>
              <h2 className="ml-auto text-[11px]">GRAPHICS</h2>
            </div>
            <ul className="min-h-0 flex-1 overflow-hidden border-x border-b border-[#2d76b4]">
              {graphics.map((g, i) => (
                <li key={g}>
                  <button
                    type="button"
                    className={`block h-[13px] w-full pl-px text-left text-[11px] leading-[14px] ${
                      i === 0 ? "bg-[#0078d7] text-white" : "text-black"
                    }`}
                  >
                    {g}
                  </button>
                </li>
              ))}
            </ul>
          </div>
        </section>
        <div className="min-w-0 flex-1 bg-[#b4cfe0] pr-1 pl-1">
          <div className="h-full border border-[#666] bg-[#dfdfcf]">
            <Schematic />
          </div>
        </div>
      </main>
      <div className="h-0.5 shrink-0" />
      <StatusBar />
      <TaskBar />
    </div>
  );
}
